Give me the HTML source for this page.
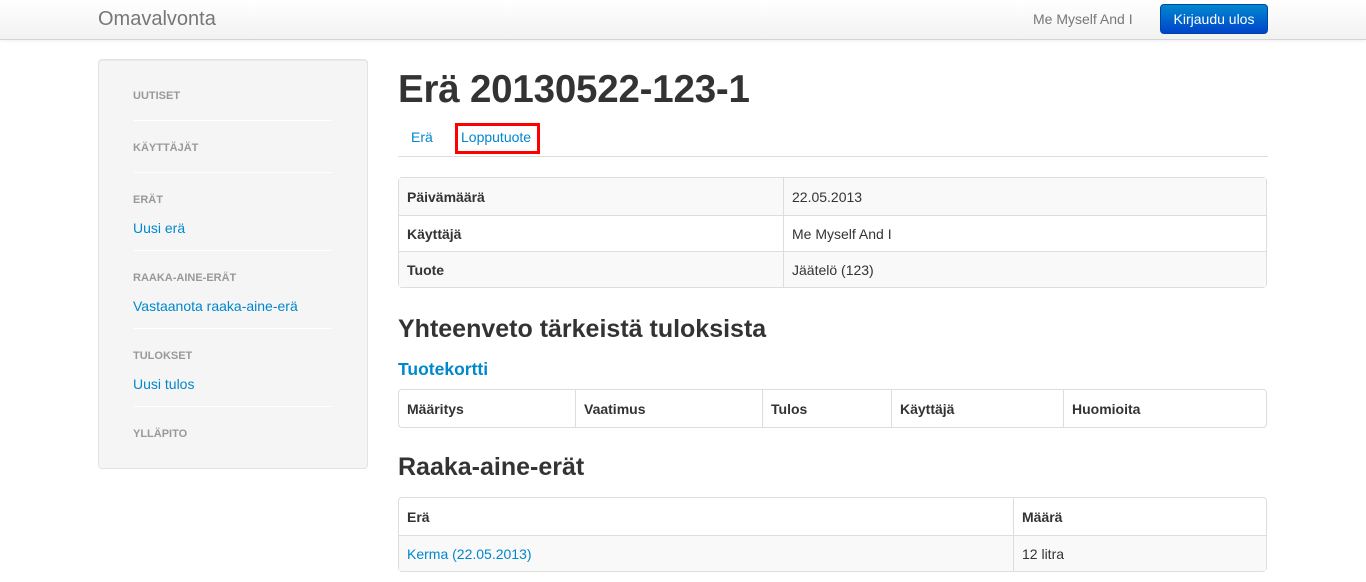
<!DOCTYPE html>
<html><head><meta charset="utf-8"><style>
*{margin:0;padding:0;box-sizing:border-box}
body{width:1366px;height:582px;overflow:hidden;background:#fff;font-family:"Liberation Sans",Arial,sans-serif;font-size:14px;color:#333;position:relative}
.a{position:absolute;white-space:nowrap}
.nav{position:absolute;left:0;top:0;width:1366px;height:40px;background:linear-gradient(#fff,#f2f2f2);border-bottom:1px solid #d4d4d4;box-shadow:0 1px 4px rgba(0,0,0,.065)}
.btn{position:absolute;left:1160px;top:4px;width:108px;height:30px;border-radius:4px;background:linear-gradient(#0088cc,#0044cc);border:1px solid #0044aa;color:#fff;font-size:14px;text-align:center;line-height:28px}
.side{position:absolute;left:98px;top:59px;width:270px;height:410px;background:#f5f5f5;border:1px solid #e3e3e3;border-radius:4px;box-shadow:inset 0 1px 1px rgba(0,0,0,.05)}
.hd{font-size:11px;font-weight:bold;color:#999;text-transform:uppercase;left:133px}
.lk{color:#0088cc;left:133px;font-size:14px}
.dv{position:absolute;left:134px;width:198px;height:1px;background:#e5e5e5;border-bottom:1px solid #fff}
table{position:absolute;border-collapse:separate;border-spacing:0;border:1px solid #ddd;border-radius:4px;left:398px;width:869px}
td{border-left:1px solid #ddd;border-top:1px solid #ddd;height:36px;padding:0 8px;vertical-align:middle;font-size:14px}
tr:first-child td{border-top:0;height:37px}
td:first-child{border-left:0}
.s td{background:#f9f9f9}
b{font-weight:bold}
h2{position:absolute;left:398px;font-size:25px;font-weight:bold;color:#333}
</style></head><body>
<div class="nav"></div>
<div class="a" style="left:98px;top:8px;font-size:20px;color:#777">Omavalvonta</div>
<div class="a" style="left:1033px;top:11px;color:#777">Me Myself And I</div>
<div class="btn">Kirjaudu ulos</div>

<div class="side"></div>
<div class="a hd" style="top:90px">Uutiset</div>
<div class="dv" style="top:120px"></div>
<div class="a hd" style="top:142px">Käyttäjät</div>
<div class="dv" style="top:172px"></div>
<div class="a hd" style="top:194px">Erät</div>
<div class="a lk" style="top:220px">Uusi erä</div>
<div class="dv" style="top:250px"></div>
<div class="a hd" style="top:272px">Raaka-aine-erät</div>
<div class="a lk" style="top:298px">Vastaanota raaka-aine-erä</div>
<div class="dv" style="top:328px"></div>
<div class="a hd" style="top:350px">Tulokset</div>
<div class="a lk" style="top:376px">Uusi tulos</div>
<div class="dv" style="top:406px"></div>
<div class="a hd" style="top:428px">Ylläpito</div>

<div class="a" style="left:398px;top:68px;font-size:38.5px;font-weight:bold;color:#333;letter-spacing:-0.2px">Erä 20130522-123-1</div>
<div class="a" style="left:411px;top:129px;color:#0088cc">Erä</div>
<div class="a" style="left:455px;top:123px;width:85px;height:31px;border:3px solid #f00"></div>
<div class="a" style="left:461px;top:129px;color:#0088cc">Lopputuote</div>
<div class="a" style="left:398px;top:156px;width:870px;height:1px;background:#ddd"></div>

<table style="top:177px">
<tr class="s"><td style="width:384px"><b>Päivämäärä</b></td><td>22.05.2013</td></tr>
<tr><td><b>Käyttäjä</b></td><td>Me Myself And I</td></tr>
<tr class="s"><td><b>Tuote</b></td><td>Jäätelö (123)</td></tr>
</table>

<h2 style="top:315px">Yhteenveto tärkeistä tuloksista</h2>
<div class="a" style="left:398px;top:359px;font-size:17.5px;font-weight:bold;color:#0088cc">Tuotekortti</div>
<table style="top:389px">
<tr><td style="width:176px"><b>Määritys</b></td><td style="width:187px"><b>Vaatimus</b></td><td style="width:129px"><b>Tulos</b></td><td style="width:172px"><b>Käyttäjä</b></td><td><b>Huomioita</b></td></tr>
</table>

<h2 style="top:453px">Raaka-aine-erät</h2>
<table style="top:497px">
<tr><td style="width:614px"><b>Erä</b></td><td><b>Määrä</b></td></tr>
<tr class="s"><td style="color:#0088cc">Kerma (22.05.2013)</td><td>12 litra</td></tr>
</table>
</body></html>
